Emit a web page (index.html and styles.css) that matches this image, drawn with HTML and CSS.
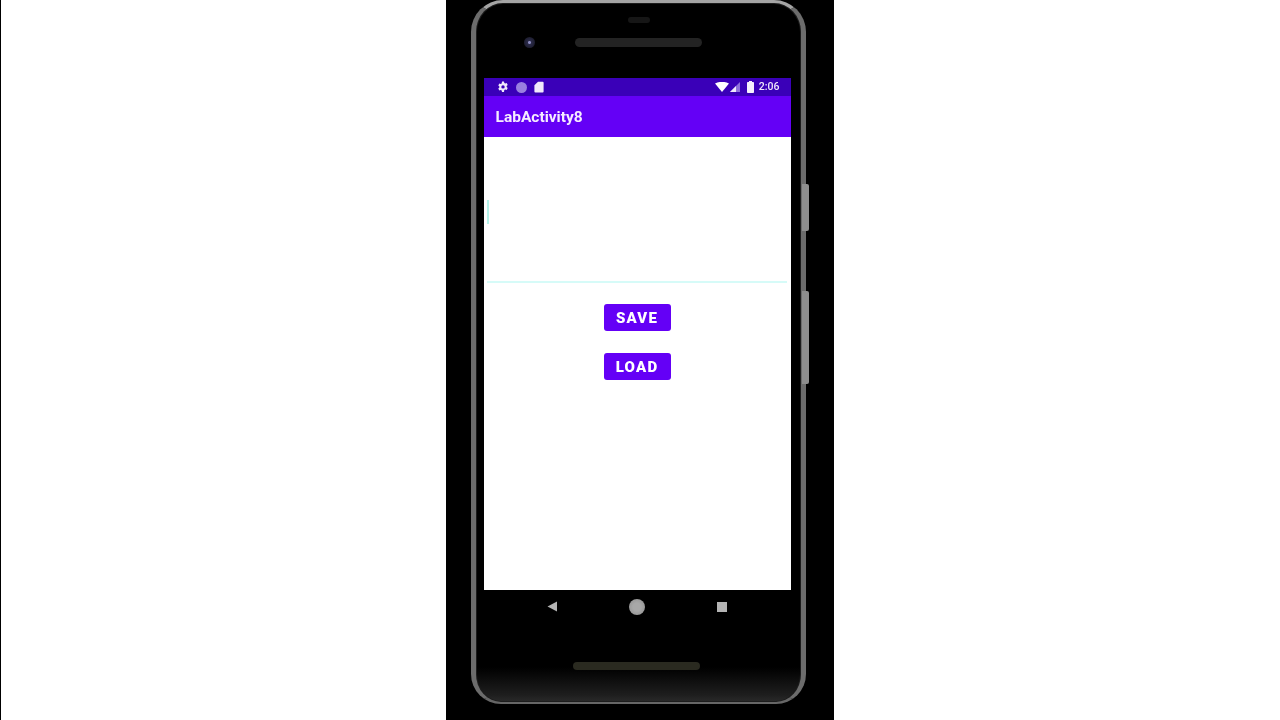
FILE: index.html
```html
<!DOCTYPE html>
<html lang="en">
<head>
<meta charset="utf-8">
<title>LabActivity8</title>
<link rel="stylesheet" href="styles.css">
</head>
<body>
<main class="video">
  <div class="phone">
    <span class="side-btn power"></span>
    <span class="side-btn volume"></span>
    <div class="bezel-top">
      <span class="sensor"></span>
      <div class="bezel-row">
        <span class="camera"></span>
        <span class="speaker"></span>
      </div>
    </div>
    <div class="screen">
      <div class="status-bar">
        <div class="status-left">
          <svg class="ico" width="12" height="12" viewBox="0 0 12 12"><path fill="#f1e9fb" fill-rule="evenodd" d="M5 .6h2l.3 1.5 1 .5 1.4-.5 1 1.8-1.1 1a3 3 0 0 1 0 1.2l1.1 1-1 1.8-1.4-.5-1 .5L7 11H5l-.3-1.6-1-.5-1.4.5-1-1.8 1.1-1a3 3 0 0 1 0-1.2l-1.1-1 1-1.8 1.4.5 1-.5zM6 4.2a1.7 1.7 0 1 0 0 3.4 1.7 1.7 0 0 0 0-3.4z"/></svg>
          <span class="dot"></span>
          <svg class="ico" width="10" height="12" viewBox="0 0 10 12"><path fill="#f1e9fb" d="M4 .8h4.6q1 0 1 1v8.6q0 1-1 1H1.4q-1 0-1-1V4.2z"/></svg>
        </div>
        <div class="status-right">
          <svg class="ico" width="14" height="10" viewBox="0 0 14 10"><path fill="#fff" d="M0 1.6Q7-2 14 1.6L7 10z"/></svg>
          <svg class="ico signal" width="10" height="10" viewBox="0 0 10 10"><path fill="#8f6fdc" d="M10 0v10H0z"/><path fill="#f1e9fb" d="M6 4v6H0z"/></svg>
          <svg class="ico battery" width="7" height="12" viewBox="0 0 7 12"><path fill="#f6f0fd" d="M2 0h3v1h1.2q.8 0 .8.8v9.4q0 .8-.8.8H.8q-.8 0-.8-.8V1.8Q0 1 .8 1H2z"/></svg>
          <span class="clock">2:06</span>
        </div>
      </div>
      <header class="app-bar">LabActivity8</header>
      <div class="content">
        <div class="edit-field"><span class="cursor"></span></div>
        <div class="actions">
          <button class="btn" type="button">SAVE</button>
          <button class="btn" type="button">LOAD</button>
        </div>
      </div>
    </div>
    <div class="bezel-bottom">
      <nav class="nav-bar">
        <svg width="11" height="11" viewBox="0 0 11 11"><path fill="#b4b4b4" d="M10 0.5v10L0.5 5.5z"/></svg>
        <span class="home"></span>
        <span class="recents"></span>
      </nav>
      <span class="speaker speaker-bottom"></span>
    </div>
  </div>
</main>
</body>
</html>
```
FILE: styles.css
```css
* { box-sizing: border-box; }
html, body { margin: 0; height: 100%; }
body {
  background: #fff;
  border-left: 1px solid #000;
  width: 1280px;
  height: 720px;
  overflow: hidden;
  display: flex;
  justify-content: center;
  font-family: Roboto, "Liberation Sans", sans-serif;
}
.video {
  width: 388px;
  height: 720px;
  margin-left: -2px;
  background: #000;
  padding-left: 25px;
}
.phone {
  position: relative;
  width: 335px;
  height: 704px;
  padding: 0 10px 0 8px;
  border-style: solid;
  border-width: 3px 5px 2px 5px;
  border-color: #a4a4a4 #6c6c6c #666 #6c6c6c;
  border-radius: 32px 32px 30px 30px;
  background: linear-gradient(#000 0, #000 95%, #1e1e1e 99%, #2a2a2a 100%);
  box-shadow: inset 0 0 0 1px #1c1c1c;
  display: flex;
  flex-direction: column;
  filter: blur(0.5px);
}
.side-btn {
  position: absolute;
  left: 100%;
  width: 7px;
  margin-left: 1px;
  background: #8e8e8e;
  border-radius: 0 2px 2px 0;
}
.power { top: 181px; height: 47px; }
.volume { top: 288px; height: 93px; }
.bezel-top {
  height: 75px;
  flex: none;
  display: flex;
  flex-direction: column;
  align-items: center;
  padding-top: 14px;
}
.sensor {
  width: 22px;
  height: 6px;
  margin-left: 3px;
  border-radius: 3px;
  background: #161616;
}
.bezel-row {
  width: 100%;
  display: flex;
  align-items: center;
  margin-top: 14px;
  padding-left: 40px;
}
.camera {
  width: 11px;
  height: 11px;
  border-radius: 50%;
  background: radial-gradient(circle, #8b8bc0 0 1px, #2a2a48 2px, #14141e 100%);
}
.speaker {
  display: block;
  width: 127px;
  height: 9px;
  border-radius: 5px;
  background: #232323;
  margin-left: 40px;
}
.screen {
  height: 512px;
  flex: none;
  display: flex;
  flex-direction: column;
  background: #fff;
}
.status-bar {
  height: 18px;
  flex: none;
  display: flex;
  justify-content: space-between;
  align-items: center;
  padding: 0 11px 0 13px;
  background: #3a00b8;
  color: #efe6fb;
}
.status-left, .status-right { display: flex; align-items: center; }
.status-left { gap: 7px; }
.ico { display: block; }
.dot {
  width: 11px;
  height: 11px;
  border-radius: 50%;
  background: #9a7fe0;
}
.signal { margin-left: 1px; }
.battery { margin-left: 7px; }
.clock {
  margin-left: 5px;
  font-size: 10.5px;
  font-weight: 500;
  line-height: 12px;
}
.app-bar {
  height: 41px;
  flex: none;
  padding-left: 12px;
  background: #6400f6;
  color: #f6ecff;
  font-size: 15.5px;
  font-weight: 700;
  line-height: 42px;
}
.content { flex: 1; min-height: 0; }
.edit-field {
  height: 146px;
  margin: 0 4px 0 3px;
  padding-top: 63px;
  border-bottom: 2px solid #d6fbf8;
}
.cursor {
  display: block;
  width: 2px;
  height: 24px;
  background: #b4f3ea;
}
.actions {
  display: flex;
  flex-direction: column;
  align-items: center;
  gap: 22px;
  margin-top: 21px;
}
.btn {
  width: 67px;
  height: 27px;
  padding: 0;
  border: 0;
  border-radius: 3px;
  background: #6400f6;
  color: #fff;
  font-family: Roboto, "Liberation Sans", sans-serif;
  font-size: 15px;
  font-weight: 900;
  letter-spacing: 1.2px;
}
.bezel-bottom {
  flex: 1;
  min-height: 0;
  display: flex;
  flex-direction: column;
  align-items: center;
}
.nav-bar {
  width: 100%;
  display: flex;
  justify-content: space-between;
  align-items: center;
  margin-top: 8px;
  padding: 0 64px 0 63px;
  height: 17px;
}
.home {
  width: 16px;
  height: 16px;
  border-radius: 50%;
  background: radial-gradient(circle, #a8a8a8 0 4px, #8c8c8c 100%);
}
.recents {
  width: 10px;
  height: 10px;
  background: #b4b4b4;
}
.speaker-bottom {
  margin: 47px 0 0 -1px;
  height: 8px;
  background: #2a2a20;
}
```
